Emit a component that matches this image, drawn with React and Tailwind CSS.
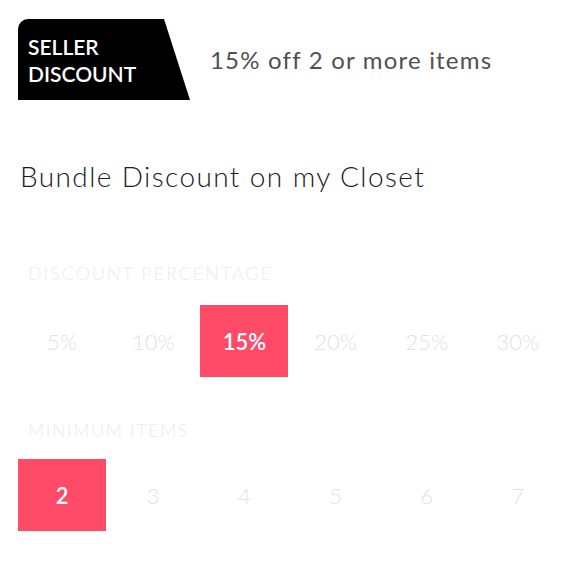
import React, { useState } from "react";

const percentages = [5, 10, 15, 20, 25, 30];
const minItems = [2, 3, 4, 5, 6, 7];

const OptionRow = ({ options, selected, onSelect, suffix = "" }) => (
  <div className="grid grid-cols-6 gap-[3px] px-[18px]">
    {options.map((opt) => (
      <button
        key={opt}
        onClick={() => onSelect(opt)}
        className={`h-[72px] flex items-center justify-center text-[22px] ${
          selected === opt
            ? "bg-[#ff4a68] text-white font-semibold"
            : "bg-white text-[#e2e2e2] font-light"
        }`}
      >
        {opt}
        {suffix}
      </button>
    ))}
  </div>
);

const App = () => {
  const [percent, setPercent] = useState(15);
  const [items, setItems] = useState(2);

  return (
    <main className="w-[580px] h-[580px] bg-white font-['Lato',sans-serif] overflow-hidden">
      {/* Seller discount banner */}
      <header className="flex items-center pt-[19px] pl-[18px]">
        <div className="w-[172px] h-[81px] bg-black rounded-tl-[10px] [clip-path:polygon(0_0,146px_0,172px_100%,0_100%)] flex flex-col justify-center pl-[10px] text-white text-[21px] leading-[27px] font-semibold">
          <span>SELLER</span>
          <span>DISCOUNT</span>
        </div>
        <p className="ml-[20px] text-[24px] text-[#505050] tracking-[1.2px]">
          {percent}% off {items} or more items
        </p>
      </header>

      <h1 className="mt-[58px] ml-[20px] text-[28px] leading-[36px] text-[#1c1c1c] font-light tracking-[1.4px]">
        Bundle Discount on my Closet
      </h1>

      <section className="mt-[67px]">
        <h2 className="ml-[28px] text-[18px] leading-[24px] text-[#ececec] font-light tracking-[1.95px]">
          DISCOUNT PERCENTAGE
        </h2>
        <div className="mt-[20px]">
          <OptionRow
            options={percentages}
            selected={percent}
            onSelect={setPercent}
            suffix="%"
          />
        </div>
      </section>

      <section className="mt-[41px]">
        <h2 className="ml-[28px] text-[18px] leading-[24px] text-[#ececec] font-light tracking-[1.5px]">
          MINIMUM ITEMS
        </h2>
        <div className="mt-[17px]">
          <OptionRow options={minItems} selected={items} onSelect={setItems} />
        </div>
      </section>
    </main>
  );
};

export default App;
